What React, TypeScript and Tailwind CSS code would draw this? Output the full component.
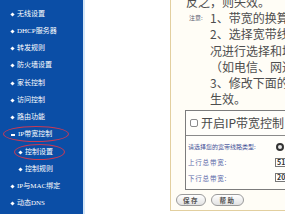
import React from "react";

const items: { t: string; kind: "top" | "open" | "sub" }[] = [
  { t: "无线设置", kind: "top" },
  { t: "DHCP服务器", kind: "top" },
  { t: "转发规则", kind: "top" },
  { t: "防火墙设置", kind: "top" },
  { t: "家长控制", kind: "top" },
  { t: "访问控制", kind: "top" },
  { t: "路由功能", kind: "top" },
  { t: "IP带宽控制", kind: "open" },
  { t: "控制设置", kind: "sub" },
  { t: "控制规则", kind: "sub" },
  { t: "IP与MAC绑定", kind: "top" },
  { t: "动态DNS", kind: "top" },
];

function Sidebar() {
  return (
    <div className="relative w-[85px] h-full shrink-0 bg-[#0b4ea6] border-r-[2px] border-[#d4e6f7] pt-[5.4px]">
      {items.map((it) => (
        <div
          key={it.t}
          className={
            "h-[17.27px] flex items-center text-white text-[7px] leading-none " +
            (it.kind === "sub" ? "pl-[19px]" : "pl-[11px]")
          }
          style={{ fontFamily: '"Liberation Serif", "Noto Sans CJK SC", serif' }}
        >
          {it.kind === "open" ? (
            <span className="w-[4px] h-[1.5px] bg-white mr-[3px] shrink-0" />
          ) : (
            <span className="w-[3px] h-[3px] bg-white mr-[3px] shrink-0 rotate-45" />
          )}
          <span className="whitespace-nowrap">{it.t}</span>
        </div>
      ))}
      <div className="absolute left-[3px] top-[126px] w-[66px] h-[16px] rounded-[50%] border border-[#c83a55]" />
      <div className="absolute left-[14px] top-[144px] w-[51px] h-[16px] rounded-[50%] border border-[#c83a55]" />
    </div>
  );
}

function Panel() {
  const cjk = { fontFamily: '"Noto Sans CJK SC", "Liberation Sans", sans-serif' };
  return (
    <div className="flex-1 h-[211px] border-l border-b border-[#e2cf9f] bg-[#fffdf6] overflow-hidden flex flex-col">
      <div
        className="-mt-[6px] h-[116px] shrink-0 pl-[15px] text-[12px] leading-[16.2px] text-[#4e4e4e] whitespace-nowrap"
        style={cjk}
      >
        <div>反之，则失效。</div>
        <div className="flex items-center">
          <span className="ml-[3px] w-[21px] shrink-0 text-[6px] text-[#5a5a70]">注意:</span>
          <span>1、带宽的换算关系为：1Mbps = 1000Kbps；</span>
        </div>
        <div className="pl-[24px]">2、选择宽带线路类型及填写带宽大小时，请根据实际情</div>
        <div className="pl-[24px]">况进行选择和填写，如不清楚，请咨询您的带宽提供商</div>
        <div className="pl-[24px]">（如电信、网通等）；</div>
        <div className="pl-[24px]">3、修改下面的配置项后，请点击“保存”按钮，使配置项</div>
        <div className="pl-[24px]">生效。</div>
      </div>
      <div className="ml-[14px] h-[80px] shrink-0 border border-[#7c7c7c] border-r-0 bg-[#fffefa]" style={cjk}>
        <div className="h-[25px] flex items-center pl-[4px] border-b border-[#8a8a8a] whitespace-nowrap">
          <span className="w-[8px] h-[8px] rounded-[2px] border border-[#8a8a8a] bg-white mr-[3px] shrink-0" />
          <span className="text-[12px] text-[#4a4a4a] leading-none">开启IP带宽控制</span>
        </div>
        <div className="pt-[3px] pl-[2px] text-[6px] leading-none whitespace-nowrap">
          <div className="h-[15.5px] flex items-center">
            <span className="w-[88px] shrink-0 text-[#3f4f96]">请选择您的宽带线路类型:</span>
            <span className="w-[8px] h-[8px] shrink-0 rounded-full border-[2.5px] border-[#333] bg-[#e8e8e8]" />
          </div>
          <div className="h-[15.5px] flex items-center">
            <span className="w-[87px] shrink-0 text-[6.5px] tracking-[0.8px] text-[#5a68a8]">上行总带宽:</span>
            <span className="w-[20px] h-[9px] shrink-0 border border-[#777] bg-white pl-[1px] text-[7px] font-bold text-[#333] flex items-center">512</span>
          </div>
          <div className="h-[15.5px] flex items-center">
            <span className="w-[87px] shrink-0 text-[6.5px] tracking-[0.8px] text-[#5a68a8]">下行总带宽:</span>
            <span className="w-[20px] h-[9px] shrink-0 border border-[#777] bg-white pl-[1px] text-[7px] font-bold text-[#333] flex items-center">2048</span>
          </div>
        </div>
      </div>
      <div className="mt-[4px] pl-[5px] flex gap-[5px]" style={cjk}>
        <div className="w-[30px] h-[12px] rounded-full border border-[#9a9a9a] bg-gradient-to-b from-white to-[#e2e2e2] flex items-center justify-center text-[6.5px] font-bold text-[#555] tracking-[1.5px] leading-none">
          保存
        </div>
        <div className="w-[33px] h-[12px] rounded-full border border-[#9a9a9a] bg-gradient-to-b from-white to-[#e2e2e2] flex items-center justify-center text-[6.5px] font-bold text-[#555] tracking-[1.5px] leading-none">
          帮助
        </div>
      </div>
    </div>
  );
}

export default function App() {
  return (
    <div className="w-[285px] h-[214px] overflow-hidden bg-white flex">
      <Sidebar />
      <div className="w-[85px] shrink-0" />
      <Panel />
    </div>
  );
}
